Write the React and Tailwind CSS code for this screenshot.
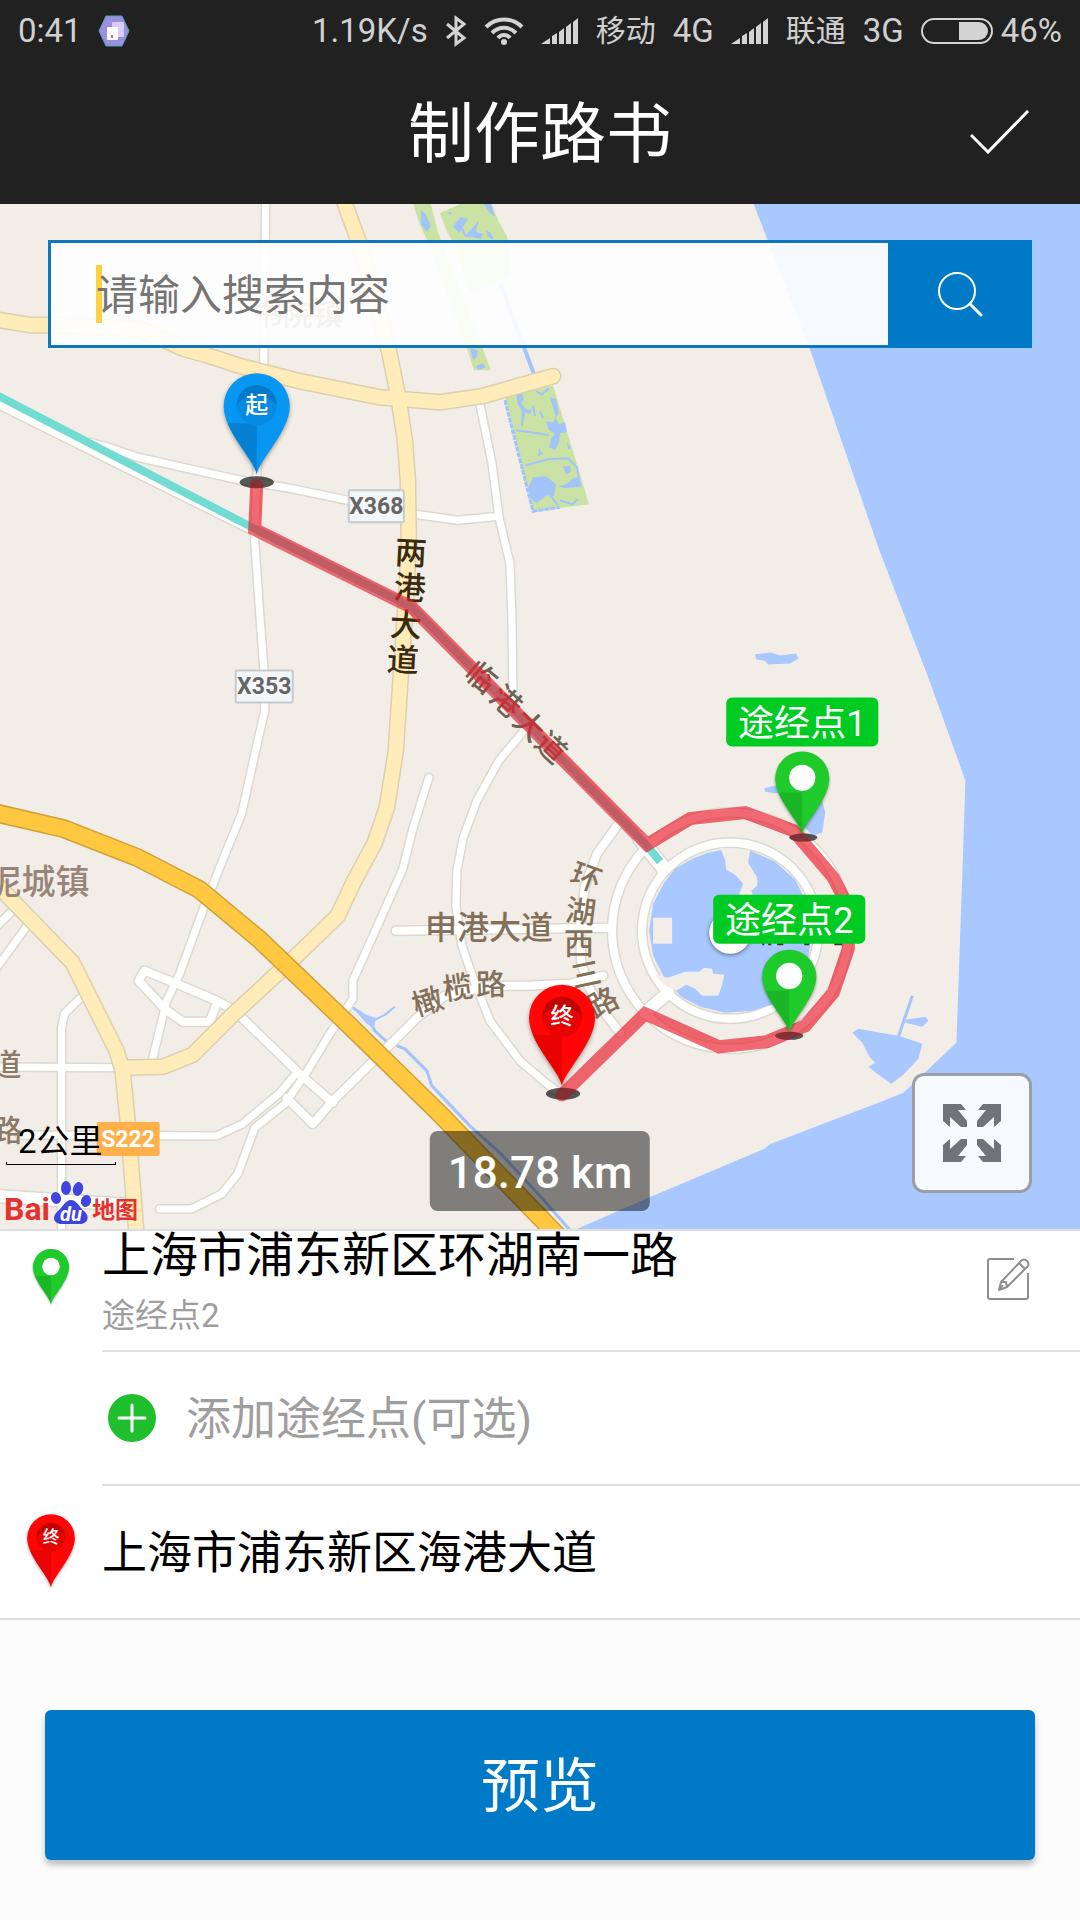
const FONT = 'font-[Roboto,"Noto_Sans_CJK_SC",sans-serif]';

const whiteRoads = [
  ["M266 195 L264 365 L257 475 L255 540 L260 613 L265 680 L265 710 L253 763 L242 813 L222 862 L203 910 L180 973 L167 1000 L152 1062", 7],
  ["M90 442 L112 448 L138 457 L241 480 L290 488 L348 500 L415 514 L458 520 L499 516", 7],
  ["M480 404 L492 463 L499 517 L510 563 L512 620 L513 700", 7],
  ["M530 722 L520 735 L499 760 L477 800 L463 838 L457 870 L456 905 L462 945 L473 977 L490 1020 L520 1060 L547 1083 L562 1094", 7],
  ["M429 777 L413 828 L403 868 L380 920 L353 980 L353 998 L330 1033 L306 1073 L285 1103 L255 1127 L238 1173 L222 1193 L192 1208 L160 1208", 7],
  ["M297 1072 L280 1092 L243 1123 L217 1135 L20 1134", 7],
  ["M145 970 L177 983 L217 1000 L235 1010 L302 1075 L333 1102", 8],
  ["M145 970 L139 980 L165 1008 L183 1021 L210 1021 L217 1003", 8],
  ["M287 1097 L313 1123 L333 1100 L387 1047 L417 1017 L445 995 L490 985 L527 985 L570 983 L603 975", 8],
  ["M62 1235 L62 1027 L65 1013 L80 998", 7],
  ["M-5 1066 L120 1067", 7],
  ["M-5 1195 L130 1204", 12],
  ["M-5 928 L15 908", 7],
  ["M-5 970 L27 926", 7],
  ["M396 930 L612 927", 8],
  ["M617 825 L597 853 L585 885 L580 925 L581 960 L588 985 L603 1010 L620 1032", 8],
  ["M-10 399 L256 531 L412 608 L647 846 L664 868", 9],
  ["M640 838 L664 868", 14],
  ["M645 1012 L668 992", 12],
];

const yellowRoads = [
  ["M-5 319 L31 325 L50 325 L140 329 L185 349 L207 355 L241 366 L300 381 L379 397 L441 402 L482 396 L553 376", 14],
  ["M342 195 L360 245 L389 350 L399 400 L405 440 L408 480 L409 545 L406 600 L401 673 L396 750 L387 807 L375 842 L353 883 L338 915 L300 952 L233 1014 L193 1054 L163 1066 L123 1067", 14],
  ["M-8 878 L10 897 L73 962 L117 1050 L123 1070 L128 1120 L137 1235", 14],
];

const ORANGE = "M-5 812 L64 828 L138 857 L200 889 L260 939 L350 1025 L440 1113 L558 1235";
const CREEK = "M353 1007 L368 1017 L375 1030 L387 1041 L405 1048 L427 1070 L432 1085 L470 1125 L500 1152 L540 1195 L575 1235";
const ROUTE =
  "M257 485 L255 529 L412 607 L647 844 L690 818 L745 812 L793 830 L833 877 L845 900 L848 920 L848 948 L833 992 L805 1025 L766 1041 L719 1046 L645 1013 L562 1094";

function Roads({ roads, casing, fill }) {
  return (
    <g fill="none" strokeLinejoin="round" strokeLinecap="round">
      {roads.map(([d, w]) => (
        <path key={d} d={d} stroke={casing} strokeWidth={w + 3} />
      ))}
      {roads.map(([d, w]) => (
        <path key={d} d={d} stroke={fill} strokeWidth={w} />
      ))}
    </g>
  );
}

function Glyph({ x, y, r = 0, size = 30, fill = "#84705a", children }) {
  return (
    <text
      x={x}
      y={y}
      fontSize={size}
      fill={fill}
      fontWeight="500"
      textAnchor="middle"
      dominantBaseline="central"
      transform={`rotate(${r} ${x} ${y})`}
    >
      {children}
    </text>
  );
}

function PinShape({ kind, mark }) {
  const colors = {
    start: ["#0796f2", "#0672bd", "#0672bd"],
    end: ["#ff0505", "#d80000", "#b30000"],
    via: ["#1fca2b", "#17a822", "#ffffff"],
  }[kind];
  return (
    <g>
      <path
        d="M0 101 C-3 86 -33 58 -33 33 A33 33 0 0 1 33 33 C33 58 3 86 0 101 Z"
        fill={colors[0]}
        className="drop-shadow-[0_2px_2px_rgba(0,0,0,0.35)]"
      />
      <path d="M0 101 C-2 88 -22 68 -29 50 L0 50 Z" fill={colors[1]} opacity="0.6" />
      {kind === "via" ? (
        <circle cy="32" r="16" fill="#fff" />
      ) : (
        <>
          <circle cy="32" r="20" fill={colors[0]} />
          <circle cy="32" r="20" fill={colors[2]} opacity="0.3" />
          <path d="M-20 32 A20 20 0 0 1 20 32 A22 16 0 0 0 -20 32" fill={colors[2]} opacity="0.7" />
          <text y="32" fill="#fff" fontSize="23" fontWeight="500" textAnchor="middle" dominantBaseline="central">
            {mark}
          </text>
        </>
      )}
    </g>
  );
}

function RoadBadge({ x, y, w, text, fill = "#f5f6f8", stroke = "#c5c9d0", color = "#666" }) {
  return (
    <g>
      <rect x={x} y={y} width={w} height="32" rx="1" fill={fill} stroke={stroke} strokeWidth="2" />
      <text x={x + w / 2} y={y + 24} fontSize="23" fontWeight="700" fill={color} textAnchor="middle">
        {text}
      </text>
    </g>
  );
}

function ViaLabel({ x, y, text }) {
  return (
    <g>
      <rect x={x} y={y} width="152" height="49" rx="6" fill="#00cb22" />
      <text x={x + 76} y={y + 38} fontSize="36" fill="#fff" textAnchor="middle">
        {text}
      </text>
    </g>
  );
}

function MarkerShadows({ opacity }) {
  return (
    <g fill="#222" opacity={opacity}>
      <ellipse cx="257" cy="482" rx="17" ry="6" />
      <ellipse cx="563" cy="1093" rx="17" ry="6" />
      <ellipse cx="803" cy="837" rx="14" ry="4" />
      <ellipse cx="789" cy="1035" rx="14" ry="4" />
    </g>
  );
}

function MapCanvas() {
  return (
    <svg
      viewBox="0 204 1080 1024"
      preserveAspectRatio="xMidYMid slice"
      className="absolute inset-0 h-full w-full"
      role="img"
      aria-label="路线地图"
    >
      <rect x="-500" y="-300" width="2080" height="2000" fill="#f2eee7" />
      <path
        d="M748 190 L810 350 L879 550 L929 680 L965 780 L962 870 L956 1042 L922 1074 L903 1092 L880 1101 L770 1143 L764 1148 L650 1196 L570 1231 L560 1700 L1600 1700 L1600 190 Z"
        fill="#a9c8ff"
      />

      <g fill="#cbe2a5">
        <path d="M412 200 L430 200 L438 232 L491 370 L474 370 L467 348 L427 240 L420 225 Z" />
        <path d="M440 213 L470 200 L490 200 L499 222 L507 236 L511 262 L508 277 L470 293 L455 245 L447 232 Z" />
        <path d="M505 395 L553 385 L589 504 L533 511 Z" />
      </g>
      <g fill="#a3c3fb">
        <path d="M421 210 L426 214 L431 226 L427 232 L421 224 Z" />
        <path d="M470 348 L478 350 L477 357 L473 360 Z M476 366 L482 363 L486 367 L478 370 Z" />
        <path d="M453 226 L461 217 L468 219 L463 227 L466 235 L476 224 L479 220 L476 232 L483 234 L481 239 L472 237 L465 237 L462 230 L459 233 Z M484 204 L491 204 L495 217 L489 212 Z M486 230 L491 233 L494 240 L488 237 Z M448 212 L452 212 L450 215 Z" />
        <path d="M516 393 L522 394 L524 399 L521 403 L526 409 L532 410 L530 414 L525 412 L523 426 L521 425 L522 411 L518 404 Z" />
        <path d="M550 397 L556 399 L559 413 L555 417 L559 424 L565 422 L567 432 L560 433 L559 442 L555 450 L549 447 L551 439 L555 433 L549 430 L546 421 L553 422 L556 417 Z" />
        <path d="M533 477 L546 476 L556 484 L554 496 L547 495 L536 503 L531 498 L528 488 Z" />
        <path d="M563 466 L570 466 L571 472 L566 474 Z M567 442 L571 448 L568 449 Z M573 478 L579 477 L582 486 L566 488 L558 486 L566 484 Z M539 448 L543 454 L538 456 Z" />
      </g>
      <g fill="none" stroke="#a3c3fb" strokeWidth="2">
        <path d="M505 400 L533 511 L560 507" strokeDasharray="5 1" strokeWidth="3" />
        <path d="M516 430 L538 433 L549 435 M526 465 L548 459 L568 458 L577 467 L579 478" />
        <path d="M550 495 L558 505 M560 500 L572 504 L578 499 M536 391 L542 394 L549 388 M533 405 L535 416 M540 411 L543 418" />
        <path d="M500 283 L534 374" strokeWidth="4" />
        <path d={CREEK} strokeWidth="3" />
        <path d="M373 1020 L385 1014 L395 1006" strokeWidth="2" />
        <path d="M912 995 L898 1036" strokeWidth="3" />
      </g>
      <g fill="#a9c8ff">
        <path d="M353 1007 L366 1014 L376 1017 L374 1028 L366 1022 Z" />
        <path d="M755 654 L762 653 L770 652 L780 655 L796 653 L798 658 L790 663 L768 664 L764 660 L756 659 Z" />
        <path d="M764 788 L775 785 L790 790 L775 793 L765 791 Z M806 808 L822 800 L825 812 L822 832 L812 835 L804 826 Z" />
        <path d="M852 1032 L858 1028 L880 1032 L898 1035 L922 1043 L918 1058 L903 1074 L891 1083 L877 1073 L868 1066 L875 1062 L869 1056 L862 1042 Z" />
        <path d="M905 1019 L925 1016 L928 1020 L922 1026 L905 1022 Z" />
      </g>

      <g fill="none" stroke="#dcd9cf" strokeWidth="11">
        <circle cx="730" cy="930" r="118" />
        <circle cx="730" cy="930" r="88" />
      </g>
      <Roads roads={whiteRoads} casing="#dcd9cf" fill="#fffffe" />
      <g fill="none" stroke="#fffffe" strokeWidth="8">
        <circle cx="730" cy="930" r="118" />
        <circle cx="730" cy="930" r="88" />
      </g>
      <path
        d="M664 882 L675 868 L692 858 L708 852 L722 849 L750 850 L775 861 L795 879 L808 905 L812 930 L808 957 L795 985 L775 1003 L752 1010 L725 1012 L700 1006 L681 996 L664 977 L653 955 L649 930 L653 903 Z"
        fill="#a9c8ff"
      />
      <g fill="#f2eee7">
        <path d="M720 847 L750 849 L748 862 L757 877 L757 885 L751 890 L756 902 L743 900 L739 893 L743 883 L735 874 L726 869 L725 859 Z" />
        <path d="M653 917 H672 V943 H653 Z" />
        <path d="M655 974 L668 977 L685 971 L699 971 L704 967 L712 968 L713 973 L724 974 L722 984 L718 995 L702 995 L695 988 L686 984 L676 990 L664 984 Z" />
      </g>
      <circle cx="730" cy="932" r="21" fill="#fff" className="drop-shadow-[0_1px_2px_rgba(0,0,0,0.5)]" />
      <path d="M762 943 H764 M768 943 H771 M777 943 H783 M804 943 H809 M834 943 H842" stroke="#43341d" strokeWidth="3" />

      <Roads roads={yellowRoads} casing="#ddcfb0" fill="#ffecb8" />
      <g fill="none">
        <path d={ORANGE} stroke="#d0a13c" strokeWidth="19" />
        <path d={ORANGE} stroke="#ffc840" strokeWidth="16" />
        <path d="M-10 391 L256 529 L412 607 L647 845 L660 861" stroke="#70dcd2" strokeWidth="8" />
      </g>

      <RoadBadge x={349} y={490} w={55} text="X368" />
      <RoadBadge x={236} y={670} w={57} text="X353" />
      <RoadBadge x={98} y={1122} w={61} text="S222" fill="#ffb04a" stroke="#ffb04a" color="#fff" />

      <Glyph x={411} y={553} r={3} size={32} fill="#3a2a12">两</Glyph>
      <Glyph x={410} y={588} r={3} size={32} fill="#3a2a12">港</Glyph>
      <Glyph x={406} y={625} r={3} size={32} fill="#3a2a12">大</Glyph>
      <Glyph x={403} y={660} r={3} size={32} fill="#3a2a12">道</Glyph>
      <Glyph x={481} y={677} r={40} fill="#6f6252">临</Glyph>
      <Glyph x={506} y={701} r={42} fill="#6f6252">港</Glyph>
      <Glyph x={529} y={725} r={44} fill="#6f6252">大</Glyph>
      <Glyph x={551} y={747} r={44} fill="#6f6252">道</Glyph>
      <Glyph x={586} y={877} r={20}>环</Glyph>
      <Glyph x={581} y={911} r={7}>湖</Glyph>
      <Glyph x={579} y={943}>西</Glyph>
      <Glyph x={586} y={974} r={-12}>三</Glyph>
      <Glyph x={603} y={1002} r={-28}>路</Glyph>
      <Glyph x={489} y={927} size={32}>申港大道</Glyph>
      <Glyph x={428} y={1001} r={-18}>橄</Glyph>
      <Glyph x={458} y={987} r={-8}>榄</Glyph>
      <Glyph x={491} y={984} r={-2}>路</Glyph>
      <Glyph x={39} y={881} size={34} fill="#98857a">泥城镇</Glyph>
      <Glyph x={7} y={1064} fill="#8d7968">道</Glyph>
      <Glyph x={8} y={1130} fill="#8d7968">路</Glyph>
      <Glyph x={298} y={314} fill="#8d7968">书院镇</Glyph>

      <MarkerShadows opacity="0.6" />
      <path d={ROUTE} fill="none" stroke="#e91c2a" strokeOpacity="0.66" strokeWidth="13" strokeLinecap="round" strokeLinejoin="miter" />
      <MarkerShadows opacity="0.4" />

      <g transform="translate(257 373)"><PinShape kind="start" mark="起" /></g>
      <g transform="translate(562 984)"><PinShape kind="end" mark="终" /></g>
      <g transform="translate(802 751) scale(0.82)"><PinShape kind="via" /></g>
      <ViaLabel x={726} y={697} text="途经点1" />
      <ViaLabel x={713} y={894} text="途经点2" />
      <g transform="translate(789 949) scale(0.82)"><PinShape kind="via" /></g>
    </svg>
  );
}

function Signal() {
  return (
    <svg viewBox="0 0 38 26" className="h-[26px] w-[38px]" fill="#d3d3d3" aria-hidden="true">
      <path d="M0 26 L9 20 V26 Z M11 18 L16 15 V26 H11 Z M18 14 L23 10 V26 H18 Z M25 9 L30 5 V26 H25 Z M32 4 L37 0 V26 H32 Z" />
    </svg>
  );
}

function StatusBar() {
  return (
    <div className="flex h-[60px] items-center justify-between pt-0.5 pr-[18px] pl-[18px] text-[33px] leading-[58px] whitespace-nowrap text-[#d0d0d0]">
      <div className="flex items-center gap-4">
        <span>0:41</span>
        <svg viewBox="0 0 32 32" className="h-8 w-8" aria-hidden="true">
          <path d="M8 1 H24 L31 16 L24 31 H8 L1 16 Z" fill="#9d8fe0" stroke="#4fa3b8" strokeWidth="1" />
          <rect x="14" y="7" width="12" height="15" rx="1" fill="#d9cdfb" />
          <rect x="9" y="12" width="11" height="13" rx="1" fill="#fff" />
          <rect x="13" y="20" width="2" height="3" fill="#8a7bd0" />
        </svg>
      </div>
      <div className="flex items-center gap-[17px]">
        <span>1.19K/s</span>
        <svg viewBox="0 0 22 32" className="h-8 w-[22px]" fill="none" stroke="#d3d3d3" strokeWidth="3" aria-hidden="true">
          <path d="M2 9 L19 23 L11 29 V3 L19 9 L2 23" />
        </svg>
        <svg viewBox="0 0 40 28" className="h-7 w-10" fill="none" stroke="#d3d3d3" strokeWidth="4" aria-hidden="true">
          <path d="M2 10 C12 0 28 0 38 10 M8 16 C15 9 25 9 32 16 M14 21 C17 17 23 17 26 21" />
          <circle cx="20" cy="25" r="3" fill="#d3d3d3" stroke="none" />
        </svg>
        <Signal />
        <span className="text-[30px]">移动</span>
        <span>4G</span>
        <Signal />
        <span className="text-[30px]">联通</span>
        <span>3G</span>
        <div className="flex items-center gap-2">
          <svg viewBox="0 0 72 28" className="h-7 w-[72px]" aria-label="电量" role="img">
            <rect x="1" y="2" width="70" height="24" rx="12" fill="none" stroke="#d3d3d3" strokeWidth="2" />
            <path d="M38 5 H58 A9 9 0 0 1 58 23 H38 Z" fill="#d3d3d3" />
          </svg>
          <span>46%</span>
        </div>
      </div>
    </div>
  );
}

function BaiduLogo() {
  return (
    <div className="flex h-[46px] items-end font-bold text-[#e4322f]" aria-label="Baidu 地图">
      <span className="text-[32px] leading-[32px]">Bai</span>
      <svg viewBox="0 0 42 44" className="h-[44px] w-[42px]" aria-hidden="true">
        <g fill="#3f44df">
          <ellipse cx="6" cy="17" rx="5" ry="6" transform="rotate(-15 6 17)" />
          <ellipse cx="16" cy="7" rx="5" ry="7" />
          <ellipse cx="28" cy="8" rx="5" ry="7" transform="rotate(15 28 8)" />
          <ellipse cx="36" cy="20" rx="5" ry="6" transform="rotate(20 36 20)" />
          <path d="M21 19 C27 19 29 26 34 30 C41 36 37 43 30 43 C25 43 17 43 12 43 C4 43 1 36 8 30 C13 26 15 19 21 19 Z" />
        </g>
        <text x="21" y="40" fontSize="20" fontStyle="italic" fontWeight="700" fill="#fff" textAnchor="middle">
          du
        </text>
      </svg>
      <span className="text-[23px] leading-[28px]">地图</span>
    </div>
  );
}

function ExpandIcon() {
  const arrow = "M0 0 H18 L23 6 H15 L24 17 V23 H18 L7 13 V23 L0 17 Z";
  return (
    <svg viewBox="0 0 58 58" className="h-[58px] w-[58px]" fill="#707377" aria-hidden="true">
      <path d={arrow} />
      <path d={arrow} transform="translate(58 0) scale(-1 1)" />
      <path d={arrow} transform="translate(0 58) scale(1 -1)" />
      <path d={arrow} transform="translate(58 58) scale(-1 -1)" />
    </svg>
  );
}

function ListPin({ kind, mark, className }) {
  return (
    <svg viewBox="-36 0 72 106" className={className} aria-hidden="true">
      <PinShape kind={kind} mark={mark} />
    </svg>
  );
}

export default function App() {
  return (
    <div className={`flex min-h-screen flex-col bg-[#fcfcfc] ${FONT}`}>
      <header className="bg-[#212121]">
        <StatusBar />
        <div className="grid h-36 grid-cols-[1fr_auto_1fr] items-center px-[50px]">
          <h1 className="col-start-2 pt-1.5 text-[66px] leading-[80px] text-white">制作路书</h1>
          <button type="button" aria-label="完成" className="justify-self-end">
            <svg viewBox="0 0 60 44" className="h-[44px] w-[60px]" fill="none" stroke="#fff" strokeWidth="3" aria-hidden="true">
              <path d="M1 25 L18 42 L58 1" />
            </svg>
          </button>
        </div>
      </header>

      <main className="flex flex-1 flex-col">
        <section className="relative min-h-[600px] flex-1 overflow-hidden">
          <MapCanvas />

          <form className="absolute inset-x-12 top-9 flex h-[108px]" onSubmit={(e) => e.preventDefault()}>
            <label className="flex flex-1 items-center border-[3px] border-r-0 border-[#0d77bb] bg-white/90 pl-[45px]">
              <span className="-mr-1.5 h-[58px] w-1.5 bg-[#ffd040]" aria-hidden="true" />
              <input
                type="text"
                aria-label="搜索"
                placeholder="请输入搜索内容"
                className="relative h-full w-full min-w-0 bg-transparent pt-0.5 text-[42px] text-[#333] outline-none placeholder:text-[#757575] placeholder:opacity-100"
              />
            </label>
            <button type="submit" aria-label="搜索" className="flex w-36 items-center justify-center bg-[#007ac7]">
              <svg viewBox="0 0 46 46" className="h-[46px] w-[46px]" fill="none" stroke="#fff" strokeWidth="2" strokeLinecap="round" aria-hidden="true">
                <circle cx="20" cy="20" r="18" />
                <path d="M33 33 L44 44" strokeWidth="3" />
              </svg>
            </button>
          </form>

          <div className="absolute bottom-1 left-1">
            <div className="ml-0.5 w-[110px] pl-3 text-[33px] leading-[40px] whitespace-nowrap text-black">2公里</div>
            <div className="ml-0.5 h-[3px] w-[110px] border-x border-b border-black" />
            <div className="mt-3.5">
              <BaiduLogo />
            </div>
          </div>

          <div className="absolute bottom-[18px] left-1/2 -translate-x-1/2 rounded-lg bg-black/[0.47] px-[18px] pt-3.5 pb-2.5 text-[44px] leading-[56px] font-medium whitespace-nowrap text-white">
            18.78 km
          </div>

          <button
            type="button"
            aria-label="全屏"
            className="absolute right-12 bottom-9 flex h-[120px] w-[120px] items-center justify-center rounded-xl border-[3px] border-[#9b9fa6] bg-white/90"
          >
            <ExpandIcon />
          </button>
        </section>

        <ul className="border-y-2 border-[#dedede] bg-white">
          <li className="flex">
            <div className="flex w-[102px] justify-center pt-[18px]">
              <ListPin kind="via" className="h-[58px] w-[40px]" />
            </div>
            <div className="flex flex-1 items-start justify-between border-b-2 border-[#e2e2e2] pr-[50px]">
              <div className="pb-2.5">
                <div className="text-[48px] leading-[50px] text-black">上海市浦东新区环湖南一路</div>
                <div className="pt-[11px] text-[33px] leading-[48px] text-[#9e9e9e]">途经点2</div>
              </div>
              <button type="button" aria-label="编辑" className="mt-[26px]">
                <svg viewBox="0 0 44 44" className="h-[44px] w-[44px]" fill="none" stroke="#8f8f8f" strokeWidth="2" strokeLinejoin="round" aria-hidden="true">
                  <path d="M28 2 H4 Q2 2 2 4 V40 Q2 42 4 42 H40 Q42 42 42 40 V16" />
                  <path d="M13 33 L15 25 L35 4 Q38 1 41 4 Q44 7 41 10 L21 30 Z M33 6 L39 12 M15 25 L20 25 L21 30 M13 33 L17 28" />
                </svg>
              </button>
            </div>
          </li>
          <li className="flex pl-[102px]">
            <button type="button" className="flex flex-1 items-center border-b-2 border-[#dedede] pl-1.5 text-left">
              <svg viewBox="0 0 48 48" className="h-12 w-12" aria-hidden="true">
                <circle cx="24" cy="24" r="24" fill="#1fbf2e" />
                <path d="M11 24 H37 M24 11 V37" stroke="#fff" strokeWidth="3" strokeLinecap="round" />
              </svg>
              <span className="pt-1 pl-[30px] text-[45px] leading-[128px] text-[#9e9e9e]">添加途经点(可选)</span>
            </button>
          </li>
          <li className="flex items-center">
            <div className="flex w-[102px] justify-center">
              <ListPin kind="end" mark="终" className="h-[77px] w-[52px]" />
            </div>
            <div className="pt-1 text-[45px] leading-[128px] text-black">上海市浦东新区海港大道</div>
          </li>
        </ul>
      </main>

      <footer className="px-[45px] pt-[90px] pb-[60px]">
        <button
          type="button"
          className="w-full rounded-md bg-[#007ac7] pt-1 text-[59px] leading-[146px] text-white shadow-[0_5px_6px_rgba(0,0,0,0.25)]"
        >
          预览
        </button>
      </footer>
    </div>
  );
}
